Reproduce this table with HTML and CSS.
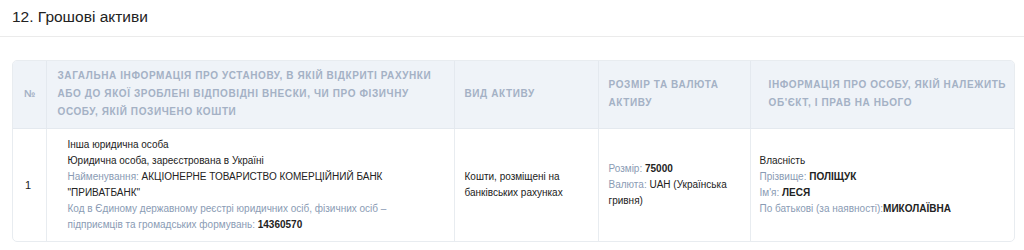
FILE: index.html
```html
<!DOCTYPE html>
<html lang="uk">
<head>
<meta charset="utf-8">
<link rel="stylesheet" href="styles.css">
</head>
<body>
<div class="section-head">
  <h2 class="section-title">12. Грошові активи</h2>
</div>
<div class="content">
  <div class="table-wrap">
    <table class="assets">
      <colgroup>
        <col class="c-num"><col class="c-info"><col class="c-kind"><col class="c-size"><col class="c-owner">
      </colgroup>
      <thead>
        <tr>
          <th class="th-num">№</th>
          <th class="th-info">Загальна інформація про установу, в якій відкриті рахунки або до якої зроблені відповідні внески, чи про фізичну особу, якій позичено кошти</th>
          <th class="th-kind">Вид активу</th>
          <th class="th-size">Розмір та валюта активу</th>
          <th class="th-owner">Інформація про особу, якій належить об'єкт, і прав на нього</th>
        </tr>
      </thead>
      <tbody>
        <tr>
          <td class="td-num">1</td>
          <td class="td-info">
            <div>Інша юридична особа</div>
            <div>Юридична особа, зареєстрована в Україні</div>
            <div><span class="lbl">Найменування:</span> АКЦІОНЕРНЕ ТОВАРИСТВО КОМЕРЦІЙНИЙ БАНК "ПРИВАТБАНК"</div>
            <div><span class="lbl">Код в Єдиному державному реєстрі юридичних осіб, фізичних осіб – підприємців та громадських формувань:</span> <b>14360570</b></div>
          </td>
          <td class="td-kind">Кошти, розміщені на банківських рахунках</td>
          <td class="td-size">
            <div><span class="lbl">Розмір:</span> <b>75000</b></div>
            <div><span class="lbl">Валюта:</span> UAH (Українська гривня)</div>
          </td>
          <td class="td-owner">
            <div>Власність</div>
            <div><span class="lbl">Прізвище:</span> <b>ПОЛІЩУК</b></div>
            <div><span class="lbl">Ім'я:</span> <b>ЛЕСЯ</b></div>
            <div><span class="lbl">По батькові (за наявності):</span><b>МИКОЛАЇВНА</b></div>
          </td>
        </tr>
      </tbody>
    </table>
  </div>
</div>
</body>
</html>
```

FILE: styles.css
```css
html, body {
  margin: 0;
  padding: 0;
  background: #ffffff;
  font-family: "Liberation Sans", Arial, sans-serif;
  color: #212529;
}

.section-head {
  height: 36px;
  border-bottom: 1px solid #ebebeb;
  padding: 0 12px;
  display: flex;
  align-items: center;
}

.section-title {
  margin: 0;
  font-size: 15.5px;
  font-weight: normal;
  color: #222;
  position: relative;
  top: -1px;
}

.content {
  padding: 23px 9px 0 12px;
}

.table-wrap {
  border: 1px solid #e8ecf0;
  border-radius: 5px;
  overflow: hidden;
  width: 1001px;
}

.assets {
  border-collapse: collapse;
  table-layout: fixed;
  width: 1001px;
}

.c-num { width: 33px; }
.c-info { width: 408px; }
.c-kind { width: 144px; }
.c-size { width: 152px; }
.c-owner { width: 264px; }

.assets th {
  background: #eff3f8;
  color: #a4b1c5;
  font-size: 10px;
  font-weight: bold;
  text-transform: uppercase;
  letter-spacing: 0.6px;
  line-height: 18px;
  text-align: left;
  vertical-align: middle;
  height: 67px;
  padding: 0 10px;
  border-left: 1px solid #e4e9ef;
  border-bottom: 1px solid #e4e9ef;
  box-sizing: border-box;
}

.assets th:first-child,
.assets td:first-child { border-left: none; }

.th-num { padding: 0 0 0 11px !important; letter-spacing: 0 !important; }
.th-info { padding-left: 11px !important; padding-right: 6px !important; }
.th-owner { padding-left: 18px !important; padding-right: 4px !important; }

.assets td {
  font-size: 10px;
  line-height: 16px;
  color: #222;
  vertical-align: middle;
  height: 113px;
  padding: 0 10px;
  border-left: 1px solid #e8ecf0;
  box-sizing: border-box;
}

.td-num { padding-left: 12px !important; font-size: 11px !important; }
.td-info { padding-left: 21px !important; padding-right: 30px !important; }
.td-owner { padding-left: 9px !important; }

.lbl { color: #8a9bb4; }

.assets td b { font-weight: bold; color: #222; }
```
